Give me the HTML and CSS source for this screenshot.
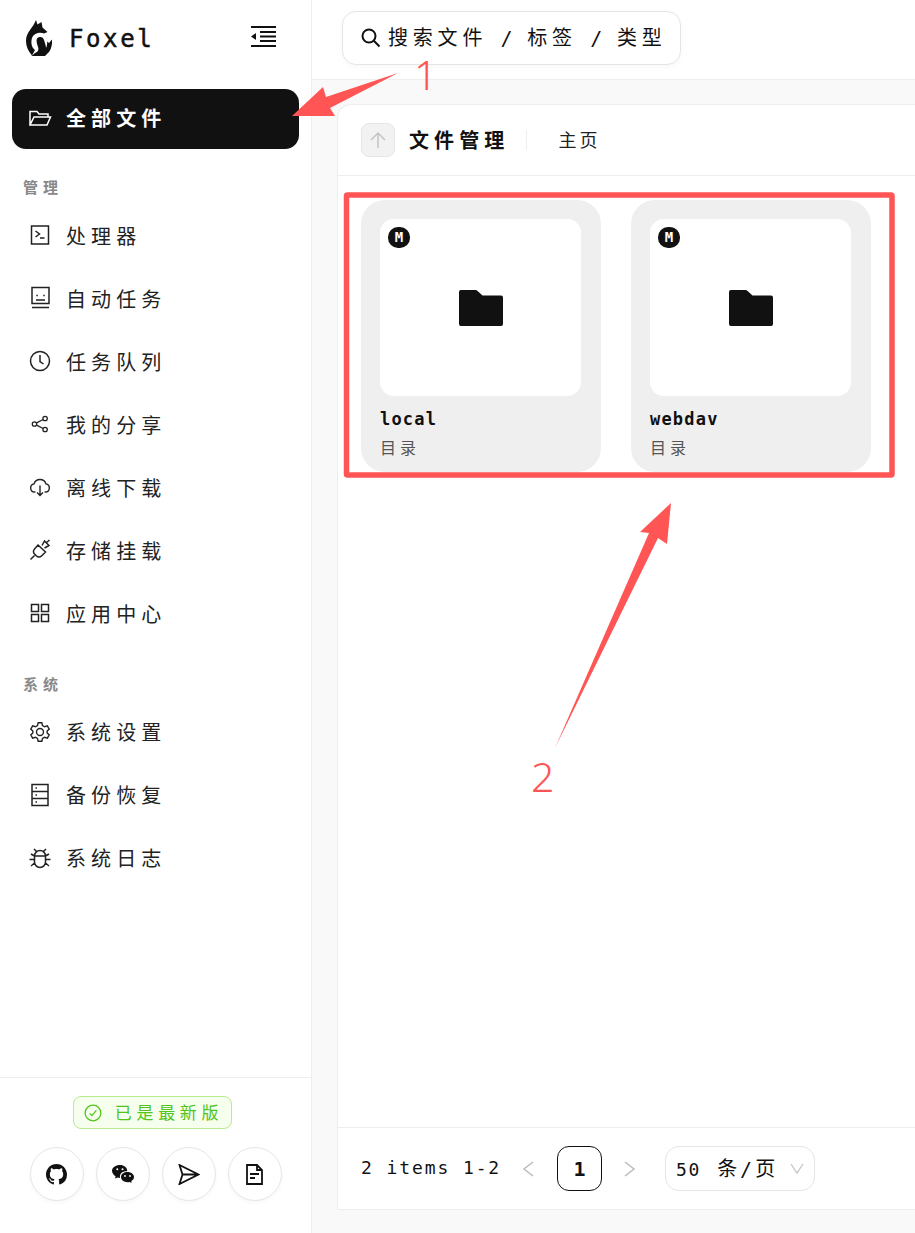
FILE: index.html
```html
<!DOCTYPE html>
<html lang="zh">
<head>
    <meta charset="UTF-8" />
    <title>Foxel</title>
    <link rel="stylesheet" href="styles.css">
</head>
<body>
<div class="app">

    <!-- sidebar -->
    <aside class="sidebar">
        <div class="logo-row">
            <svg class="logo" viewBox="26 20 26 36"><path d="M36 20L37.5 24.5 41.5 22 42.5 27.5 47.5 32 44 33.5C40 32 34 33 32 38 30.5 43 32 48 35 50L32 55.5C28 51 26 46 26 41 26 32 33 28 36 20Z"/><path d="M37 38.5C40 36 43 37 44 40 45 43 46 46 46 48 47 46 47.5 44 47 41.5L49 43 52 39.5C52.5 45 51 51 47 54L45 56H31.5L35 53C38 52 39 50 38 47 37 44 36 41 37 38.5Z"/></svg>
            <span class="logo-text">Foxel</span>
            <svg class="collapse" viewBox="0 0 25 21"><path d="M0 1h25M9 6h16M9 10.500h16M9 15h16M0 20h25" fill="none" stroke="#111" stroke-width="1.800"/><path d="M0 10.500L5 7v7z" fill="#111"/></svg>
        </div>

        <nav class="nav">
            <a class="nav-item active">
                <svg class="icon" viewBox="0 0 24 24"><path d="M2 19V5.500h7l2 2.500h9v3M2 19h17l3.500-8H6L2 19z"/></svg>
                <span>全部文件</span>
            </a>

            <div class="nav-title">管理</div>
            <a class="nav-item">
                <svg class="icon" viewBox="0 0 24 24"><path d="M3.500 3h17v18h-17zM7.500 8l4 3-4 3M12 15h4.500"/></svg>
                <span>处理器</span>
            </a>
            <a class="nav-item">
                <svg class="icon" viewBox="0 0 24 24"><path d="M4 1.500h17v16H4zM4 21.500h17M8.300 9.500h1.500M15.300 9.500h1.500M8 14h9"/></svg>
                <span>自动任务</span>
            </a>
            <a class="nav-item">
                <svg class="icon" viewBox="0 0 24 24"><circle cx="12" cy="12" r="9.500"/><path d="M12 6v6.500l3.500 2.500"/></svg>
                <span>任务队列</span>
            </a>
            <a class="nav-item">
                <svg class="icon" viewBox="0 0 24 24"><g transform="translate(12 12) scale(.85) translate(-12 -12)"><circle cx="18" cy="5.500" r="2.600"/><circle cx="5.500" cy="12" r="2.600"/><circle cx="18" cy="18.500" r="2.600"/><path d="M8 10.700l7.700-4M8 13.300l7.700 4"/></g></svg>
                <span>我的分享</span>
            </a>
            <a class="nav-item">
                <svg class="icon" viewBox="0 0 24 24"><g transform="translate(12 12) scale(.92) translate(-12 -12)"><path d="M7 17.500H6A4.500 4.500 0 0 1 5.500 8.600 6.800 6.800 0 0 1 18.500 8.600 4.500 4.500 0 0 1 18 17.500H17M12 10.500V21M8.800 18l3.200 3.200L15.200 18"/></g></svg>
                <span>离线下载</span>
            </a>
            <a class="nav-item">
                <svg class="icon" viewBox="0 0 24 24"><path d="M10 7l7.500 7-4 4a3.500 3.500 0 0 1-5 0l-2-2a3.500 3.500 0 0 1 0-5zM6.500 17.500L2.500 21.500M14 7.500l2.500-4.500 4.500 4.500-4.500 2.500M18 5L21.500 2"/></svg>
                <span>存储挂载</span>
            </a>
            <a class="nav-item">
                <svg class="icon" viewBox="0 0 24 24"><path d="M3.500 3.500h7v7h-7zM13.500 3.500h7v7h-7zM3.500 13.500h7v7h-7zM13.500 13.500h7v7h-7z"/></svg>
                <span>应用中心</span>
            </a>

            <div class="nav-title nav-title-sys">系统</div>
            <a class="nav-item">
                <svg class="icon" viewBox="0 0 24 24"><g transform="translate(12 12) scale(.92) translate(-12 -12)"><circle cx="12" cy="12" r="3.800"/><path d="M10 2h4l.7 3 2.300 1.300 3-.9 2 3.400-2.200 2.200v2l2.200 2.200-2 3.400-3-.9-2.300 1.300-.7 3h-4l-.7-3L7 17.700l-3 .9-2-3.400L4.200 13v-2L2 8.800l2-3.400 3 .9L9.300 5z"/></g></svg>
                <span>系统设置</span>
            </a>
            <a class="nav-item">
                <svg class="icon" viewBox="0 0 24 24"><path d="M4 1.500h16v21H4zM4 8.500h16M4 15.500h16M7.500 5h1.500M7.500 12h1.500M7.500 19h1.500"/></svg>
                <span>备份恢复</span>
            </a>
            <a class="nav-item">
                <svg class="icon" viewBox="0 0 24 24"><path d="M6.500 10a5.500 5.500 0 0 1 11 0v6a5.500 5.500 0 0 1-11 0zM6.500 10h11M8.500 5.500L6 3M15.500 5.500L18 3M6.500 13.500H1.500M17.500 13.500h5M6.500 10L3 8M17.500 10l3.500-2M6.500 17L3 20M17.500 17l3.500 3"/></svg>
                <span>系统日志</span>
            </a>
        </nav>

        <div class="side-foot">
            <div class="version">
                <svg class="version-icon" viewBox="0 0 24 24"><circle cx="12" cy="12" r="10.500"/><path d="M7.500 12.500l3 3 6-7"/></svg>
                <span>已是最新版</span>
            </div>
            <div class="links">
                <a class="round-btn">
                    <svg width="21" height="21" viewBox="0 0 16 16"><path fill="#111" d="M8 0C3.580 0 0 3.580 0 8c0 3.540 2.290 6.530 5.470 7.590.4.070.55-.17.55-.38 0-.19-.01-.82-.01-1.490-2.010.37-2.530-.49-2.690-.94-.09-.23-.48-.94-.82-1.130-.28-.15-.68-.52-.01-.53.63-.01 1.080.58 1.230.82.72 1.210 1.870.87 2.330.66.070-.52.28-.87.51-1.070-1.780-.2-3.640-.89-3.640-3.950 0-.87.31-1.590.82-2.150-.08-.2-.36-1.020.08-2.120 0 0 .67-.21 2.200.82.64-.18 1.320-.27 2-.27.68 0 1.360.09 2 .27 1.530-1.040 2.200-.82 2.200-.82.44 1.100.16 1.920.08 2.120.51.56.82 1.270.82 2.150 0 3.070-1.870 3.750-3.650 3.950.29.25.54.73.54 1.480 0 1.070-.01 1.930-.01 2.200 0 .21.15.46.55.38A8.013 8.013 0 0 0 16 8c0-4.420-3.580-8-8-8z"/></svg>
                </a>
                <a class="round-btn">
                    <svg width="22" height="18" viewBox="0 0 22 18"><path fill="#111" d="M8 0c4 0 7.200 2.500 7.200 5.800 0 .2 0 .4-.1.500-3.700-.5-7.200 1.800-7.200 5.200 0 .5.100 1 .2 1.400-.9 0-1.700-.2-2.400-.4L3 13.500l.6-2.200C1.400 10 0 8 0 5.800 0 2.500 3.600 0 8 0z"/><path fill="#111" d="M15.500 7c3.600 0 6.500 2.200 6.500 5 0 1.800-1.100 3.200-2.800 4.200l.5 1.800-2.200-1.100c-.7.2-1.400.3-2 .3-3.600 0-6.500-2.200-6.500-5.200S11.900 7 15.500 7z"/><circle cx="5.300" cy="4.300" r="1" fill="#fff"/><circle cx="10.500" cy="4.300" r="1" fill="#fff"/><circle cx="13" cy="11" r=".9" fill="#fff"/><circle cx="18" cy="11" r=".9" fill="#fff"/></svg>
                </a>
                <a class="round-btn">
                    <svg width="22" height="21" viewBox="0 0 22 21"><path fill="none" stroke="#111" stroke-width="1.800" d="M1.500 1L20.500 10.500 1.500 20 4.500 10.500zM4.500 10.500h16"/></svg>
                </a>
                <a class="round-btn">
                    <svg width="17" height="21" viewBox="0 0 17 21"><path fill="none" stroke="#111" stroke-width="1.800" d="M1 1h10l5 5v14H1zM11 1v5h5M4 10h9M4 14h5"/></svg>
                </a>
            </div>
        </div>
    </aside>

    <!-- main -->
    <main class="main">
        <header class="topbar">
            <div class="search">
                <svg class="search-icon" viewBox="0 0 20 20"><circle cx="8" cy="8" r="6.500"/><path d="M12.800 12.800L18.500 18.500"/></svg>
                <span class="search-text">搜索文件<span class="search-sep"> / </span>标签<span class="search-sep"> / </span>类型</span>
            </div>
        </header>

        <section class="panel">
            <div class="panel-head">
                <button class="up-btn">
                    <svg width="18" height="18" viewBox="0 0 18 18"><path d="M9 17V2M2 9l7-7 7 7" fill="none" stroke="#c4c4c4" stroke-width="1.500"/></svg>
                </button>
                <span class="panel-title">文件管理</span>
                <span class="head-sep"></span>
                <span class="crumb">主页</span>
            </div>

            <div class="grid">
                <div class="card">
                    <div class="thumb">
                        <span class="badge">M</span>
                        <svg class="folder" viewBox="0 0 44 36"><path d="M2 0h14.500c.7 0 1.300.3 1.800.7L23.500 5.500H42a2 2 0 0 1 2 2V34a2 2 0 0 1-2 2H2a2 2 0 0 1-2-2V2a2 2 0 0 1 2-2z"/></svg>
                    </div>
                    <div class="card-name">local</div>
                    <div class="card-type">目录</div>
                </div>
                <div class="card">
                    <div class="thumb">
                        <span class="badge">M</span>
                        <svg class="folder" viewBox="0 0 44 36"><path d="M2 0h14.500c.7 0 1.300.3 1.800.7L23.500 5.500H42a2 2 0 0 1 2 2V34a2 2 0 0 1-2 2H2a2 2 0 0 1-2-2V2a2 2 0 0 1 2-2z"/></svg>
                    </div>
                    <div class="card-name">webdav</div>
                    <div class="card-type">目录</div>
                </div>
            </div>

            <div class="pager">
                <span class="pager-total">2 items 1-2</span>
                <svg class="chev" viewBox="0 0 14 18"><path d="M12 2L3 9l9 7"/></svg>
                <span class="page-num">1</span>
                <svg class="chev" viewBox="0 0 14 18"><path d="M2 2l9 7-9 7"/></svg>
                <div class="page-size">
                    <span class="size-text">50 <span class="size-unit">条/页</span></span>
                    <svg class="size-chev" viewBox="0 0 14 12"><path d="M1 1l6 9 6-9"/></svg>
                </div>
            </div>
        </section>
    </main>
</div>

<!-- screenshot annotations drawn on top -->
<svg class="marks" viewBox="0 0 915 1233">
    <path d="M292 116L323 87 326 97 398 73 330 108 335 116z"/>
    <path d="M555 748L649 533 640 532 671 503 667 544 658 538z"/>
    <rect x="346.500" y="195" width="545.500" height="280" rx="1" class="mark-box"/>
    <text x="414" y="90" class="mark-num">1</text>
    <text x="531" y="792" class="mark-num">2</text>
</svg>
</body>
</html>
```

FILE: styles.css
```css
* {
    box-sizing: border-box;
}
body {
    margin: 0;
    font-family: "DejaVu Sans Mono", "Noto Sans CJK SC", monospace;
    color: #111;
    background: #fff;
}
.app {
    display: flex;
    height: 1233px;
    overflow: hidden;
}

/* sidebar */
.sidebar {
    width: 312px;
    flex: none;
    display: flex;
    flex-direction: column;
    border-right: 1px solid #eee;
    background: #fff;
}
.logo-row {
    height: 76px;
    margin-bottom: 13px;
    display: flex;
    align-items: center;
    padding: 0 35px 0 26px;
}
.logo {
    width: 26px;
    height: 36px;
    fill: #111;
}
.logo-text {
    margin: 1px 0 0 17px;
    font-size: 24px;
    letter-spacing: 2.600px;
    -webkit-text-stroke: 0.5px #111;
}
.collapse {
    width: 25px;
    height: 21px;
    margin: 0 0 3px auto;
}
.nav {
    flex: 1;
    padding: 0 12px;
}
.nav-item {
    height: 60px;
    margin-bottom: 3px;
    padding: 0 0 3px 16px;
    display: flex;
    align-items: center;
    gap: 14px;
    border-radius: 14px;
    font-size: 20px;
    letter-spacing: 5.100px;
    color: #222;
}
.nav-item.active {
    background: #111;
    color: #fff;
    font-weight: 700;
}
.icon {
    width: 24px;
    height: 24px;
    flex: none;
    fill: none;
    stroke: currentColor;
    stroke-width: 1.500;
}
.nav-title {
    height: 20px;
    margin: 29px 0 8.500px 11px;
    font-size: 15px;
    line-height: 20px;
    font-weight: 700;
    letter-spacing: 5px;
    color: #888;
}
.nav-title-sys {
    margin-top: 30px;
}
.side-foot {
    height: 156px;
    border-top: 1px solid #eee;
    padding-top: 18px;
    display: flex;
    flex-direction: column;
    align-items: center;
    gap: 18px;
}
.version {
    height: 33px;
    margin-right: 6px;
    padding: 0 8px 2px 10px;
    display: flex;
    align-items: center;
    gap: 13px;
    border: 1px solid #b7eb8f;
    border-radius: 8px;
    background: #f6ffed;
    color: #52c41a;
    font-size: 17px;
    letter-spacing: 4.700px;
    white-space: nowrap;
}
.version-icon {
    width: 18px;
    height: 18px;
    margin-top: 2px;
    fill: none;
    stroke: #52c41a;
    stroke-width: 1.700;
}
.links {
    display: flex;
    gap: 12px;
}
.round-btn {
    width: 54px;
    height: 54px;
    display: flex;
    align-items: center;
    justify-content: center;
    border: 1px solid #e6e6e6;
    border-radius: 50%;
    background: #fff;
    box-shadow: 0 2px 4px rgba(0,0,0,0.03);
}

/* main */
.main {
    flex: 1;
    min-width: 0;
    display: flex;
    flex-direction: column;
    background: #f9f9f9;
}
.topbar {
    height: 80px;
    flex: none;
    padding: 11px 0 0 30px;
    background: #fff;
    border-bottom: 1px solid #eee;
}
.search {
    width: 339px;
    height: 54px;
    display: flex;
    align-items: center;
    gap: 7px;
    padding-left: 18px;
    border: 1px solid #e5e5e5;
    border-radius: 14px;
    background: #fff;
    box-shadow: 0 2px 6px rgba(0,0,0,0.03);
    font-size: 20px;
    letter-spacing: 4.800px;
    white-space: nowrap;
}
.search-text {
    margin-bottom: 4px;
}
.search-sep {
    letter-spacing: 1.300px;
}
.search-icon {
    width: 20px;
    height: 20px;
    flex: none;
    fill: none;
    stroke: #111;
    stroke-width: 2;
}
.panel {
    height: 1106px;
    margin: 24px 0 0 25px;
    display: flex;
    flex-direction: column;
    background: #fff;
    border: 1px solid #eee;
    border-right: none;
    border-radius: 14px 0 0 0;
}
.panel-head {
    height: 71px;
    flex: none;
    display: flex;
    align-items: center;
    padding-left: 23px;
    border-bottom: 1px solid #eee;
}
.up-btn {
    width: 34px;
    height: 34px;
    padding: 0;
    display: flex;
    align-items: center;
    justify-content: center;
    border: 1px solid #e5e5e5;
    border-radius: 8px;
    background: #f2f2f2;
}
.panel-title {
    margin: 0 0 2px 14px;
    font-size: 20px;
    font-weight: 700;
    letter-spacing: 5.100px;
}
.head-sep {
    width: 1px;
    height: 20px;
    margin-left: 17px;
    background: #eee;
}
.crumb {
    margin: 0 0 3px 31px;
    font-size: 18px;
    letter-spacing: 3px;
    color: #222;
}
.grid {
    flex: 1;
    display: flex;
    align-items: flex-start;
    gap: 30px;
    padding: 24px 0 0 23px;
}
.card {
    width: 240px;
    height: 272px;
    padding: 19px 20px 0 19px;
    border-radius: 24px;
    background: #efefef;
}
.thumb {
    height: 177px;
    display: flex;
    align-items: center;
    justify-content: center;
    position: relative;
    border-radius: 14px;
    background: #fff;
}
.badge {
    position: absolute;
    left: 8px;
    top: 8px;
    width: 22px;
    height: 21px;
    border-radius: 10px;
    background: #111;
    color: #fff;
    font-size: 14px;
    font-weight: 700;
    line-height: 20px;
    text-align: center;
}
.folder {
    width: 44px;
    height: 36px;
    fill: #111;
}
.card-name {
    margin-top: 11px;
    font-size: 17px;
    font-weight: 700;
    line-height: 24px;
    letter-spacing: 1.200px;
}
.card-type {
    margin-top: 7px;
    font-size: 16px;
    line-height: 22px;
    letter-spacing: 4px;
    color: #555;
}
.pager {
    height: 82px;
    flex: none;
    display: flex;
    align-items: center;
    padding-left: 23px;
    border-top: 1px solid #eee;
    font-size: 18px;
    letter-spacing: 1.700px;
}
.pager-total {
    width: 160px;
    padding-bottom: 2px;
    letter-spacing: 1.900px;
}
.chev {
    width: 14px;
    height: 18px;
    flex: none;
    fill: none;
    stroke: #bbb;
    stroke-width: 1.500;
}
.page-num {
    width: 45px;
    height: 45px;
    margin: 0 21px 0 22px;
    display: flex;
    align-items: center;
    justify-content: center;
    border: 1px solid #111;
    border-radius: 12px;
    font-size: 20px;
    font-weight: 700;
    letter-spacing: 0;
}
.page-size {
    width: 150px;
    height: 45px;
    margin-left: 28px;
    display: flex;
    align-items: center;
    padding-left: 10px;
    border: 1px solid #e5e5e5;
    border-radius: 14px;
    white-space: nowrap;
}
.size-text {
    padding-bottom: 3px;
}
.size-unit {
    margin-left: 3.500px;
    font-size: 20px;
    letter-spacing: 3px;
}
.size-chev {
    width: 14px;
    height: 12px;
    margin-left: auto;
    margin-right: 10px;
    fill: none;
    stroke: #c4c4c4;
    stroke-width: 1.300;
}

/* annotations */
.marks {
    position: absolute;
    left: 0;
    top: 0;
    width: 915px;
    height: 1233px;
    fill: #ff5555;
}
.mark-box {
    fill: none;
    stroke: #ff5555;
    stroke-width: 5.500;
}
.mark-num {
    font-family: "Noto Sans", sans-serif;
    font-size: 41px;
    font-weight: 300;
}
```
